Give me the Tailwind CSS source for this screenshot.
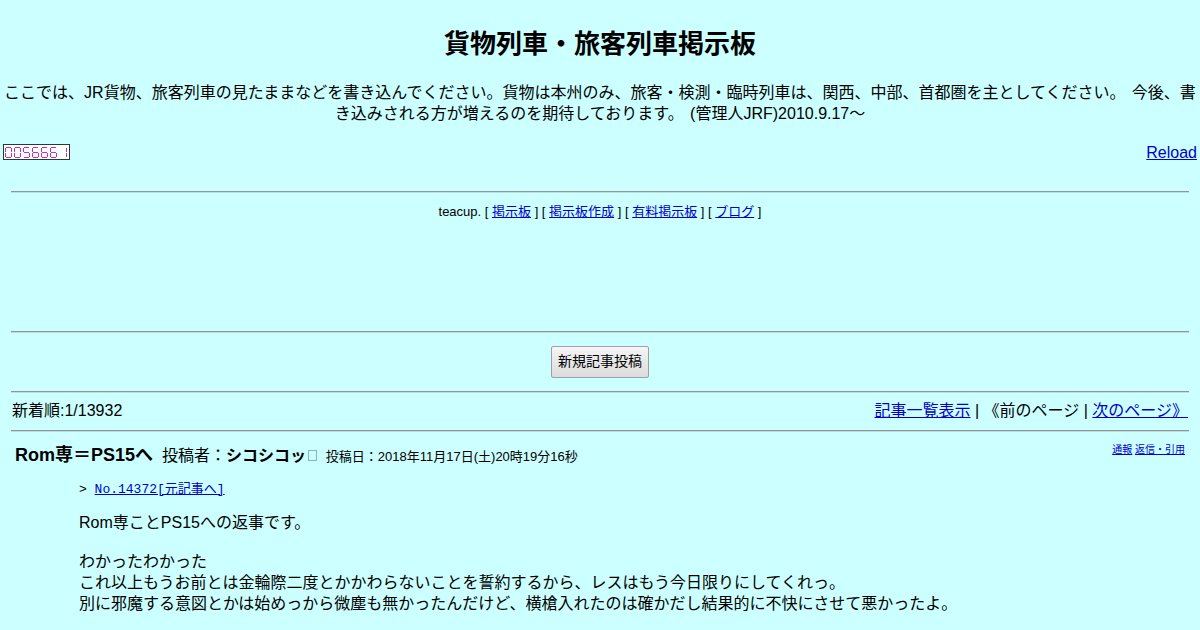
<!DOCTYPE html>
<html lang="ja">
<head>
  <meta charset="UTF-8" />
  <title>貨物列車・旅客列車掲示板</title>
  <meta name="viewport" content="width=device-width, initial-scale=1" />
  <script src="https://cdn.jsdelivr.net/npm/@tailwindcss/browser@4"></script>
</head>
<body class="h-[630px] overflow-hidden bg-[#ccffff] font-['Liberation_Sans','Noto_Sans_CJK_JP',sans-serif] text-base leading-[21px] text-black">

  <!-- Title -->
  <header class="px-[3px] pt-[25px] text-center">
    <h1 class="text-[26px] leading-[38px] font-bold">貨物列車・旅客列車掲示板</h1>
    <p class="mt-[19px] [word-spacing:2px]">ここでは、JR貨物、旅客列車の見たままなどを書き込んでください。貨物は本州のみ、旅客・検測・臨時列車は、関西、中部、首都圏を主としてください。 今後、書き込みされる方が増えるのを期待しております。 (管理人JRF)2010.9.17～</p>
  </header>

  <!-- Counter -->
  <div class="mt-[18px] flex h-[21px] items-center justify-between px-[3px]">
    <svg class="h-[17px] w-[67px]" viewBox="0 0 67 17" fill="none" shape-rendering="crispEdges">
      <rect x=".5" y=".5" width="66" height="15" fill="#fff" stroke="#2a3a2a"/>
      <g stroke="#c030c0">
        <path id="zero" d="M3 3.5h5M2.5 4v4M8.5 4v4M2.5 9v4M8.5 9v4M3 13.5h5"/>
        <use href="#zero" x="9"/>
        <path d="M21 3.5h5M20.5 4v4M21 8.5h5M26.5 9v4M21 13.5h5"/>
        <path id="six" d="M30 3.5h5M29.5 4v4M30 8.5h5M29.5 9v4M35.5 9v4M30 13.5h5"/>
        <use href="#six" x="9"/>
        <use href="#six" x="18"/>
        <path d="M63.5 4v4M63.5 9v4"/>
      </g>
    </svg>
    <a href="#" class="text-[#0000cc] underline">Reload</a>
  </div>

  <hr class="mx-[11px] mt-7 h-0.5 border-t border-b border-t-[#9a9292] border-b-[#b8e0e0]" />
  <p class="mt-2 text-center text-[13px] leading-[21px]">teacup. [ <a href="#" class="text-[#0000cc] underline">掲示板</a> ] [ <a href="#" class="text-[#0000cc] underline">掲示板作成</a> ] [ <a href="#" class="text-[#0000cc] underline">有料掲示板</a> ] [ <a href="#" class="text-[#0000cc] underline">ブログ</a> ]</p>
  <hr class="mx-[11px] mt-[109px] h-0.5 border-t border-b border-t-[#9a9292] border-b-[#b8e0e0]" />

  <div class="mt-[13px] flex justify-center">
    <button class="h-8 w-[98px] rounded-xs border border-[#a0a0a0] bg-linear-to-b from-[#f5f5f5] to-[#dcdcdc] pb-0.5 text-sm">新規記事投稿</button>
  </div>
  <hr class="mx-[11px] mt-[13px] h-0.5 border-t border-b border-t-[#9a9292] border-b-[#b8e0e0]" />
  <nav class="mx-3 mt-[7px] flex justify-between">
    <span>新着順:1/13932</span>
    <span><a href="#" class="text-[#0000cc] underline">記事一覧表示</a> | 《前のページ | <a href="#" class="text-[#0000cc] underline">次のページ》</a></span>
  </nav>
  <hr class="mx-[11px] mt-[9px] h-0.5 border-t border-b border-t-[#9a9292] border-b-[#b8e0e0]" />

  <!-- Post -->
  <article class="px-[15px] pt-[11px]">
    <div class="flex items-start justify-between">
      <p><b class="text-lg leading-6">Rom専＝PS15へ</b>&nbsp; 投稿者：<b>シコシコッ</b><span class="ml-0.5 inline-block h-[11px] w-[9px] border border-[#8bb5b5]"></span>&nbsp; <span class="text-[13px]">投稿日：2018年11月17日(土)20時19分16秒</span></p>
      <p class="text-[10px] leading-[14px]"><a href="#" class="text-[#0000cc] underline">通報</a> <a href="#" class="text-[#0000cc] underline">返信・引用</a></p>
    </div>
    <div class="ml-16">
      <p class="mt-3 font-['Liberation_Mono','Noto_Sans_CJK_JP',monospace] text-[13px]">&gt; <a href="#" class="text-[#0000cc] underline">No.14372[元記事へ]</a></p>
      <p class="mt-3">Rom専ことPS15への返事です。</p>
      <p class="mt-[18px]">わかったわかった<br />これ以上もうお前とは金輪際二度とかかわらないことを誓約するから、レスはもう今日限りにしてくれっ。<br />別に邪魔する意図とかは始めっから微塵も無かったんだけど、横槍入れたのは確かだし結果的に不快にさせて悪かったよ。</p>
    </div>
  </article>
</body>
</html>
